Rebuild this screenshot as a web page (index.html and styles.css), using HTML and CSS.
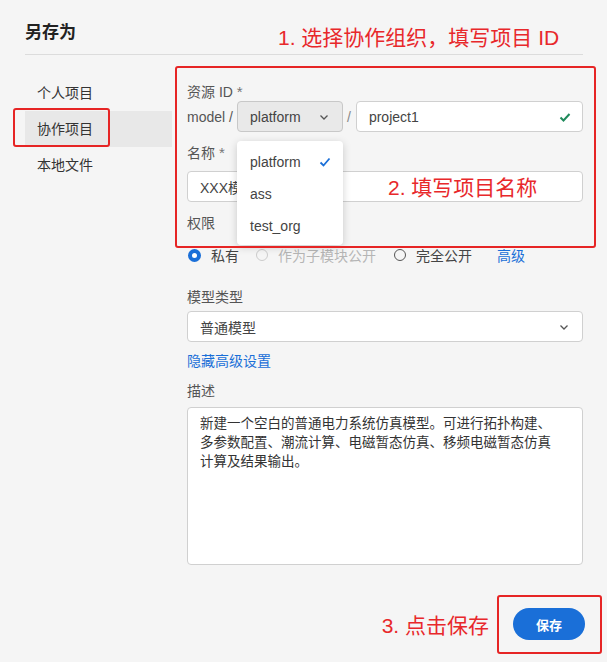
FILE: index.html
```html
<!DOCTYPE html>
<html lang="zh-CN">
<head>
  <meta charset="UTF-8">
  <title>另存为</title>
  <link rel="stylesheet" href="styles.css">
</head>
<body>

<div id="dialog">
  <div class="header">
    <h2>另存为</h2>
  </div>

  <div class="content">
    <ul class="nav">
      <li>个人项目</li>
      <li class="active">协作项目</li>
      <li>本地文件</li>
    </ul>

    <div class="form">
      <div class="label first">资源 ID <span class="req">*</span></div>
      <div class="id-row">
        <span class="prefix">model /</span>
        <div class="select org">
          <span>platform</span>
          <svg width="12" height="12" viewBox="0 0 12 12"><path d="M2.5 4.5 6 8l3.5-3.5" fill="none" stroke="#555" stroke-width="1.3"/></svg>
        </div>
        <span class="slash">/</span>
        <div class="input grow">
          <span>project1</span>
          <svg width="14" height="14" viewBox="0 0 14 14"><path d="M2.5 7.5 5.5 10.5 11.5 4" fill="none" stroke="#1f8a5b" stroke-width="2"/></svg>
        </div>
      </div>

      <div class="label">名称 <span class="req">*</span></div>
      <div class="input"><span>XXX模型</span></div>

      <div class="label">权限</div>
      <div class="radios">
        <span class="radio checked"></span><span class="opt">私有</span>
        <span class="radio disabled"></span><span class="opt disabled">作为子模块公开</span>
        <span class="radio"></span><span class="opt">完全公开</span>
        <a class="link adv">高级</a>
      </div>

      <div class="label type">模型类型</div>
      <div class="select wide">
        <span>普通模型</span>
        <svg width="12" height="12" viewBox="0 0 12 12"><path d="M2.5 4.5 6 8l3.5-3.5" fill="none" stroke="#555" stroke-width="1.3"/></svg>
      </div>
      <a class="link toggle">隐藏高级设置</a>

      <div class="label desc">描述</div>
      <div class="textarea">新建一个空白的普通电力系统仿真模型。可进行拓扑构建、多参数配置、潮流计算、电磁暂态仿真、移频电磁暂态仿真计算及结果输出。</div>

      <div class="footer">
        <span class="note note3">3. 点击保存</span>
        <button class="save">保存</button>
      </div>
    </div>
  </div>

  <!-- dropdown menu of the org select -->
  <ul class="menu">
    <li>platform
      <svg width="12" height="12" viewBox="0 0 12 12"><path d="M1.5 6.5 4.5 9.5 10.5 2.5" fill="none" stroke="#1a6fd8" stroke-width="1.8"/></svg>
    </li>
    <li>ass</li>
    <li>test_org</li>
  </ul>

  <!-- annotations -->
  <span class="note note1">1. 选择协作组织，填写项目 ID</span>
  <span class="note note2">2. 填写项目名称</span>
  <div class="mark mark-nav"></div>
  <div class="mark mark-form"></div>
  <div class="mark mark-save"></div>
</div>

</body>
</html>
```

FILE: styles.css
```css
body {
  margin: 0;
  background-color: #f5f5f5;
  font-family: "Liberation Sans", "Noto Sans CJK SC", sans-serif;
  font-size: 14px;
  color: #333;
}

#dialog {
  position: relative;
  width: 607px;
  height: 662px;
  padding: 0 24px 0 25px;
  box-sizing: border-box;
}

.header {
  height: 55px;
  padding-top: 6px;
  box-sizing: border-box;
  border-bottom: 1px solid #dcdcdc;
  display: flex;
  align-items: center;
}

.header h2 {
  margin: 0;
  font-size: 17px;
  font-weight: bold;
  color: #222;
}

.content {
  display: flex;
  gap: 15px;
}

.nav {
  list-style: none;
  margin: 20px 0 0;
  padding: 0;
  width: 147px;
}

.nav li {
  height: 36px;
  line-height: 36px;
  padding-left: 12px;
  color: #333;
}

.nav li.active {
  background-color: #e8e8e8;
}

.form {
  flex: 1;
  display: flex;
  flex-direction: column;
  padding-top: 28px;
}

.label {
  line-height: 18px;
  color: #555;
  margin: 12px 0 9px;
}

.label.first {
  margin: 0;
}

.label.type {
  margin: 24px 0 5px;
}

.label.desc {
  margin: 12px 0 7px;
}

.req {
  color: #777;
  font-size: 15px;
  vertical-align: top;
}

.id-row {
  display: flex;
  align-items: center;
  color: #555;
}

.prefix {
  width: 50px;
}

.slash {
  margin: 0 5px 0 4px;
  color: #888;
}

.select, .input {
  height: 31px;
  box-sizing: border-box;
  border: 1px solid #d0d0d0;
  border-radius: 4px;
  background-color: #fff;
  display: flex;
  align-items: center;
  justify-content: space-between;
  padding: 0 12px;
  color: #444;
}

.select.org {
  width: 106px;
  background-color: #e9e9e9;
  border-color: #c8c8c8;
}

.grow {
  flex: 1;
}

.input svg {
  margin-right: -2px;
}

.radios {
  display: flex;
  align-items: center;
  height: 18px;
  margin-top: 5px;
}

.radio {
  width: 10px;
  height: 10px;
  border: 1.5px solid #555;
  border-radius: 50%;
  margin: 0 10px 0 1px;
}

.radio.checked {
  width: 5px;
  height: 5px;
  border: 4px solid #1a6fd8;
  background-color: #fff;
}

.radio.disabled {
  border-color: #ccc;
}

.opt {
  color: #444;
  margin-right: 16px;
}

.opt.disabled {
  color: #b5b5b5;
  margin-right: 17px;
}

.link {
  color: #1a6fd8;
  cursor: pointer;
}

.adv {
  margin-left: 9px;
}

.toggle {
  margin-top: 10px;
  line-height: 18px;
}

.textarea {
  height: 158px;
  box-sizing: border-box;
  border: 1px solid #d0d0d0;
  border-radius: 4px;
  background-color: #fff;
  padding: 6px 24px 6px 12px;
  font-size: 13.5px;
  line-height: 19px;
  color: #333;
}

.footer {
  display: flex;
  justify-content: flex-end;
  align-items: center;
  margin-top: 43px;
}

.save {
  width: 72px;
  height: 32px;
  border: none;
  border-radius: 16px;
  background-color: #1a6fd8;
  color: #fff;
  font-family: inherit;
  font-size: 13px;
  font-weight: bold;
  margin-right: -2px;
}

.menu {
  position: absolute;
  left: 237px;
  top: 141px;
  width: 106px;
  margin: 0;
  padding: 5px 0 3px;
  list-style: none;
  background-color: #fff;
  border-radius: 4px;
  box-shadow: 0 2px 8px rgba(0, 0, 0, 0.18);
  box-sizing: border-box;
}

.menu li {
  height: 32px;
  line-height: 32px;
  padding: 0 12px 0 13px;
  display: flex;
  align-items: center;
  justify-content: space-between;
  color: #444;
}

.note {
  color: #e8282b;
  font-size: 21px;
  font-family: "Liberation Sans", "Noto Sans CJK SC", sans-serif;
}

.note1 {
  position: absolute;
  left: 278px;
  top: 21px;
}

.note2 {
  position: absolute;
  left: 388px;
  top: 171px;
}

.note3 {
  margin-right: 24px;
}

.mark {
  position: absolute;
  border: 2px solid #e62525;
  border-radius: 3px;
  box-sizing: border-box;
}

.mark-nav {
  left: 13px;
  top: 108px;
  width: 97px;
  height: 39px;
}

.mark-form {
  left: 175px;
  top: 66px;
  width: 421px;
  height: 182px;
}

.mark-save {
  left: 497px;
  top: 595px;
  width: 105px;
  height: 59px;
}
```
